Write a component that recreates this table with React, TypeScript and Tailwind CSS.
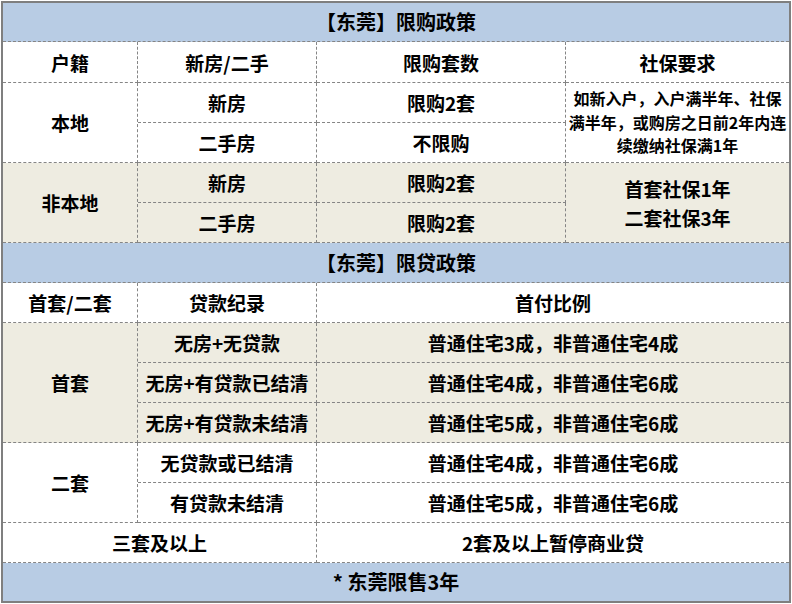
import React from "react";

type CellProps = {
  children?: React.ReactNode;
  className?: string;
};

function Cell({ children, className = "" }: CellProps) {
  return (
    <div
      className={
        "flex items-center justify-center text-center border-dashed border-[#858585] " +
        className
      }
    >
      {children}
    </div>
  );
}

export default function App() {
  const blue = "bg-[#b8cce4]";
  const beige = "bg-[#eeece1]";
  return (
    <div className="w-[792px] h-[604px] bg-white">
      <div
        className="ml-[1px] mt-[1px] w-[790px] border-2 border-solid border-[#7f7f7f] text-black font-bold text-[19px] leading-none"
        style={{ fontFamily: '"Noto Sans CJK SC", "Noto Sans", sans-serif' }}
      >
        <div className="grid grid-cols-[135px_179px_249px_1fr] grid-rows-[39px_41px_repeat(12,40px)_38px]">
          {/* Row 1 */}
          <Cell className={"col-span-4 border-b text-[20px] " + blue}>【东莞】限购政策</Cell>

          {/* Row 2 */}
          <Cell className="border-r border-b bg-white">户籍</Cell>
          <Cell className="border-r border-b bg-white">新房/二手</Cell>
          <Cell className="border-r border-b bg-white">限购套数</Cell>
          <Cell className="border-b bg-white">社保要求</Cell>

          {/* Rows 3-4 */}
          <Cell className="row-span-2 border-r border-b bg-white">本地</Cell>
          <Cell className="border-r border-b bg-white">新房</Cell>
          <Cell className="border-r border-b bg-white">限购2套</Cell>
          <Cell className="row-span-2 border-b bg-white text-[16px] leading-[23.5px] whitespace-nowrap">
            <span>
              如新入户，入户满半年、社保
              <br />
              满半年，或购房之日前2年内连
              <br />
              续缴纳社保满1年
            </span>
          </Cell>
          <Cell className="border-r border-b bg-white">二手房</Cell>
          <Cell className="border-r border-b bg-white">不限购</Cell>

          {/* Rows 5-6 */}
          <Cell className={"row-span-2 border-r border-b " + beige}>非本地</Cell>
          <Cell className={"border-r border-b " + beige}>新房</Cell>
          <Cell className={"border-r border-b " + beige}>限购2套</Cell>
          <Cell className={"row-span-2 border-b leading-[29px] " + beige}>
            <span>
              首套社保1年
              <br />
              二套社保3年
            </span>
          </Cell>
          <Cell className={"border-r border-b " + beige}>二手房</Cell>
          <Cell className={"border-r border-b " + beige}>限购2套</Cell>

          {/* Row 7 */}
          <Cell className={"col-span-4 border-b text-[20px] " + blue}>【东莞】限贷政策</Cell>

          {/* Row 8 */}
          <Cell className="border-r border-b bg-white">首套/二套</Cell>
          <Cell className="border-r border-b bg-white">贷款纪录</Cell>
          <Cell className="col-span-2 border-b bg-white">首付比例</Cell>

          {/* Rows 9-11 */}
          <Cell className={"row-span-3 border-r border-b " + beige}>首套</Cell>
          <Cell className={"border-r border-b " + beige}>无房+无贷款</Cell>
          <Cell className={"col-span-2 border-b " + beige}>普通住宅3成，非普通住宅4成</Cell>
          <Cell className={"border-r border-b " + beige}>无房+有贷款已结清</Cell>
          <Cell className={"col-span-2 border-b " + beige}>普通住宅4成，非普通住宅6成</Cell>
          <Cell className={"border-r border-b " + beige}>无房+有贷款未结清</Cell>
          <Cell className={"col-span-2 border-b " + beige}>普通住宅5成，非普通住宅6成</Cell>

          {/* Rows 12-13 */}
          <Cell className="row-span-2 border-r border-b bg-white">二套</Cell>
          <Cell className="border-r border-b bg-white">无贷款或已结清</Cell>
          <Cell className="col-span-2 border-b bg-white">普通住宅4成，非普通住宅6成</Cell>
          <Cell className="border-r border-b bg-white">有贷款未结清</Cell>
          <Cell className="col-span-2 border-b bg-white">普通住宅5成，非普通住宅6成</Cell>

          {/* Row 14 */}
          <Cell className="col-span-2 border-r border-b bg-white">三套及以上</Cell>
          <Cell className="col-span-2 border-b bg-white">2套及以上暂停商业贷</Cell>

          {/* Row 15 */}
          <Cell className={"col-span-4 text-[20px] " + blue}>* 东莞限售3年</Cell>
        </div>
      </div>
    </div>
  );
}
